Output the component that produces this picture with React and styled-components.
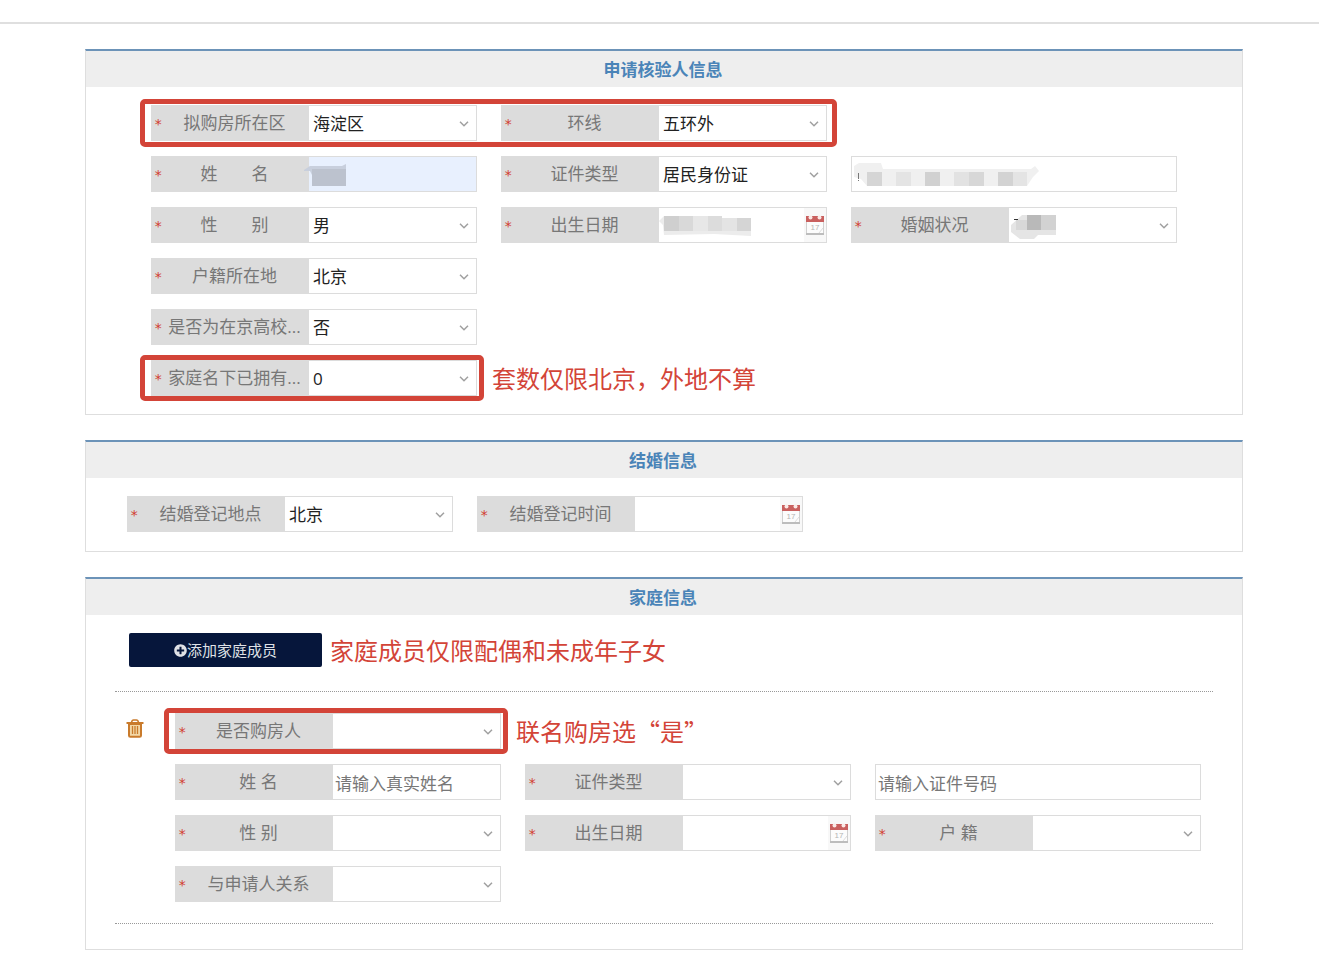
import React, { useId } from "react";
import styled, { createGlobalStyle } from "styled-components";
import { FaPlusCircle } from "react-icons/fa";

const GlobalStyle = createGlobalStyle`
  *, *::before, *::after { box-sizing: border-box; }
  body {
    margin: 0;
    background: #fff;
    color: #222;
    font-family: "Open Sans", "Noto Sans CJK SC", sans-serif;
    font-size: 17px;
    line-height: 24px;
  }
  input, select, button { font: inherit; color: inherit; }
`;

const TopBar = styled.header`
  height: 24px;
  border-bottom: 2px solid #dfdfdf;
`;

const Page = styled.main`
  display: flex;
  flex-direction: column;
  gap: 25px;
  padding: 25px 76px 4px 85px;
`;

const Panel = styled.section`
  border: 1px solid #dedede;
  border-top: 2px solid #6c93b8;
`;

const PanelTitle = styled.h2`
  margin: 0;
  padding: 7px 2px 5px 0;
  background: #eee;
  color: #4a84b8;
  font-size: 17px;
  line-height: 24px;
  font-weight: 700;
  text-align: center;
`;

const FieldGrid = styled.div`
  flex: 1;
  display: grid;
  grid-template-columns: repeat(3, minmax(0, 1fr));
  gap: 15px 24px;
  padding: ${(p) => p.$padding || "0"};
`;

const FieldBox = styled.div`
  display: flex;
  height: 36px;
  border: 1px solid #dcdcdc;
  grid-column-start: ${(p) => (p.$first ? 1 : "auto")};
`;

const FieldLabel = styled.label`
  flex: 0 0 157px;
  display: flex;
  align-items: center;
  padding: 0 2px;
  background: #dcdcdc;
  color: #777;
  white-space: pre;
`;

const Star = styled.span`
  width: 8px;
  padding-top: 2px;
  color: #d23c33;
  font-family: "DejaVu Sans Mono", monospace;
  font-size: 14px;
`;

const LabelText = styled.span`
  flex: 1;
  text-align: center;
`;

const Control = styled.div`
  position: relative;
  flex: 1;
  min-width: 0;
  display: grid;
  align-items: center;
  background: ${(p) => (p.$filled ? "#e8f0fe" : "#fff")};
  > * { grid-area: 1 / 1; }
`;

const Select = styled.select`
  width: 100%;
  height: 34px;
  padding: 2px 24px 0 4px;
  border: 0;
  outline: 0;
  appearance: none;
  background: transparent;
`;

const Input = styled.input`
  width: 100%;
  height: 34px;
  padding: 2px 2px 0;
  border: 0;
  outline: 0;
  background: transparent;
  &::placeholder { color: #777; opacity: 1; }
`;

const ChevronIcon = styled.svg`
  justify-self: end;
  margin: 2px 7px 0 0;
  pointer-events: none;
`;

const DateButton = styled.button`
  justify-self: end;
  display: grid;
  place-items: center;
  width: 22px;
  height: 34px;
  padding: 0;
  border: 0;
  background: #f8f8f8;
`;

const MosaicLayer = styled.svg`
  position: absolute;
  left: -5px;
  top: 0;
  pointer-events: none;
`;

const Highlight = styled.div`
  position: relative;
  display: grid;
  grid-column: 1 / span ${(p) => p.$span};
  grid-template-columns: repeat(${(p) => p.$span}, minmax(0, 1fr));
  gap: 24px;
  &::after {
    content: "";
    position: absolute;
    inset: ${(p) => (p.$span > 1 ? "-6px -10px -6px -11px" : "-5px -7px -5px -11px")};
    border: 5px solid #d34438;
    border-radius: 5px;
    pointer-events: none;
  }
`;

const Note = styled.span`
  color: #d34438;
  font-family: "Noto Sans CJK SC", sans-serif;
  font-size: 24px;
  line-height: 36px;
  white-space: nowrap;
`;

const SideNote = styled(Note)`
  position: absolute;
  left: calc(100% + 15px);
  top: 0;
`;

const AddRow = styled.div`
  display: flex;
  align-items: center;
  gap: 8px;
  height: 34px;
  margin: 18px 43px 24px;
`;

const AddButton = styled.button`
  display: flex;
  align-items: center;
  justify-content: center;
  width: 193px;
  height: 34px;
  padding: 0;
  border: 0;
  border-radius: 2px;
  background: #06163b;
  color: #dfe1e6;
  font-size: 15px;
`;

const Member = styled.div`
  display: flex;
  align-items: flex-start;
  margin: 0 29px 25px;
  padding: 21px 12px 21px 11px;
  border-top: 1px dotted #999;
  border-bottom: 1px dotted #999;
`;

const DeleteButton = styled.button`
  flex: 0 0 49px;
  display: flex;
  padding: 6px 0 0;
  border: 0;
  background: none;
`;

function Chevron() {
  return (
    <ChevronIcon width="10" height="6" viewBox="0 0 10 6" fill="none" stroke="#a0a0a0" strokeWidth="1.5" aria-hidden="true">
      <path d="M1 0.8 L5 4.8 L9 0.8" />
    </ChevronIcon>
  );
}

function CalendarIcon() {
  return (
    <svg width="18" height="20" viewBox="0 0 18 20" aria-hidden="true">
      <rect x="0.5" y="6" width="17" height="13" fill="#fcfcfc" stroke="#d0d0d0" />
      <rect x="0" y="18" width="18" height="2" fill="#bdbdbd" />
      <rect x="0" y="1" width="18" height="6" fill="#c9605f" />
      <circle cx="4.5" cy="2.4" r="2" fill="#fbe9e6" />
      <circle cx="13.5" cy="2.4" r="2" fill="#fbe9e6" />
      <text x="9" y="15" textAnchor="middle" fontSize="8" fontFamily="Liberation Sans, sans-serif" fill="#b4b4b4">17</text>
      <path d="M13 18 L17 13" stroke="#ddd" />
    </svg>
  );
}

function TrashIcon() {
  return (
    <svg width="18" height="19" viewBox="0 0 18 19" fill="none" aria-hidden="true">
      <path d="M3 5 H15 V16.5 Q15 17.8 13.7 17.8 H4.3 Q3 17.8 3 16.5 Z" fill="#f3d9a8" stroke="#c97b2c" strokeWidth="2" />
      <path d="M0.5 4 H17.5" stroke="#c97b2c" strokeWidth="2" />
      <path d="M5.5 3.5 Q6 1 7.5 1 H10.5 Q12 1 12.5 3.5" stroke="#c97b2c" strokeWidth="1.5" />
      <path d="M6.5 7 V15 M9 7 V15 M11.5 7 V15" stroke="#c97b2c" strokeWidth="1.3" />
    </svg>
  );
}

/* Censored values: a soft backing shape and a row of tinted blocks. */
const mosaics = {
  name: {
    backing: ["0,13 6,9 38,9 42,7 42,13 8,18 6,14 0,14", "#c8cfdd"],
    blocks: [[8, 12, 34, 17, "#bcc2ce"]],
  },
  idNumber: {
    backing: ["7,9 12,6 34,6 36,12 184,12 188,9 192,14 186,20 180,29 20,29 14,22 7,20", "#f0f0f0"],
    blocks: [
      [20, 15, 15, 14, "#d5d5d5"], [49, 15, 15, 14, "#e4e4e4"], [78, 15, 15, 14, "#d1d1d1"],
      [107, 15, 15, 14, "#e2e2e2"], [122, 15, 15, 14, "#d7d7d7"], [151, 15, 15, 14, "#d3d3d3"],
      [166, 15, 14, 14, "#e4e4e4"], [11, 16, 1, 6, "#777"], [11, 23, 1, 1, "#777"],
    ],
  },
  birth: {
    backing: ["5,13 10,8 62,8 70,12 97,12 97,28 60,26 10,27 9,17", "#ececec"],
    blocks: [
      [10, 8, 15, 15, "#cfcfcf"], [25, 8, 14, 15, "#d9d9d9"], [39, 8, 15, 15, "#e7e7e7"],
      [54, 8, 14, 15, "#dcdcdc"], [68, 10, 15, 13, "#e4e4e4"], [83, 10, 14, 13, "#d5d5d5"],
    ],
  },
  marital: {
    backing: ["7,17 18,7 52,7 52,27 34,27 30,31 16,31 7,24", "#e5e5e5"],
    blocks: [
      [12, 12, 11, 10, "#d8d8d8"], [23, 7, 14, 15, "#b9b9b9"], [37, 7, 15, 15, "#d2d2d2"], [10, 11, 4, 1, "#333"],
    ],
  },
};

function Mosaic({ kind }) {
  const { backing, blocks } = mosaics[kind];
  return (
    <MosaicLayer width="194" height="34" viewBox="0 0 194 34" aria-hidden="true">
      <polygon points={backing[0]} fill={backing[1]} />
      {blocks.map(([x, y, w, h, fill]) => (
        <rect key={`${x}-${y}`} x={x} y={y} width={w} height={h} fill={fill} />
      ))}
    </MosaicLayer>
  );
}

function Field({ label, type = "select", value = "", placeholder, mosaic, filled, first, ariaLabel }) {
  const id = useId();
  return (
    <FieldBox $first={first}>
      {label && (
        <FieldLabel htmlFor={id}>
          <Star>*</Star>
          <LabelText>{label}</LabelText>
        </FieldLabel>
      )}
      <Control $filled={filled}>
        {type === "select" ? (
          <>
            <Select id={id} defaultValue={value}>
              <option value={value}>{value}</option>
            </Select>
            <Chevron />
          </>
        ) : (
          <Input id={id} type="text" placeholder={placeholder} aria-label={ariaLabel} />
        )}
        {type === "date" && (
          <DateButton type="button" aria-label="选择日期">
            <CalendarIcon />
          </DateButton>
        )}
        {mosaic && <Mosaic kind={mosaic} />}
      </Control>
    </FieldBox>
  );
}

export default function App() {
  return (
    <div lang="zh-CN">
      <GlobalStyle />
      <TopBar />
      <Page>
        <Panel>
          <PanelTitle>申请核验人信息</PanelTitle>
          <FieldGrid $padding="18px 65px">
            <Highlight $span={2}>
              <Field label="拟购房所在区" value="海淀区" />
              <Field label="环线" value="五环外" />
            </Highlight>
            <Field first label="姓　　名" type="text" filled mosaic="name" />
            <Field label="证件类型" value="居民身份证" />
            <Field type="text" ariaLabel="证件号码" mosaic="idNumber" />
            <Field label="性　　别" value="男" />
            <Field label="出生日期" type="date" mosaic="birth" />
            <Field label="婚姻状况" mosaic="marital" />
            <Field first label="户籍所在地" value="北京" />
            <Field first label="是否为在京高校..." value="否" />
            <Highlight $span={1}>
              <Field label="家庭名下已拥有..." value="0" />
              <SideNote>套数仅限北京，外地不算</SideNote>
            </Highlight>
          </FieldGrid>
        </Panel>

        <Panel>
          <PanelTitle>结婚信息</PanelTitle>
          <FieldGrid $padding="18px 89px 19px 41px">
            <Field label="结婚登记地点" value="北京" />
            <Field label="结婚登记时间" type="date" />
          </FieldGrid>
        </Panel>

        <Panel>
          <PanelTitle>家庭信息</PanelTitle>
          <AddRow>
            <AddButton type="button">
              <FaPlusCircle size={13} aria-hidden="true" />
              添加家庭成员
            </AddButton>
            <Note>家庭成员仅限配偶和未成年子女</Note>
          </AddRow>
          <Member>
            <DeleteButton type="button" aria-label="删除家庭成员">
              <TrashIcon />
            </DeleteButton>
            <FieldGrid>
              <Highlight $span={1}>
                <Field label="是否购房人" />
                <SideNote>联名购房选“是”</SideNote>
              </Highlight>
              <Field first label="姓 名" type="text" placeholder="请输入真实姓名" />
              <Field label="证件类型" />
              <Field type="text" ariaLabel="证件号码" placeholder="请输入证件号码" />
              <Field label="性 别" />
              <Field label="出生日期" type="date" />
              <Field label="户 籍" />
              <Field first label="与申请人关系" />
            </FieldGrid>
          </Member>
        </Panel>
      </Page>
    </div>
  );
}
